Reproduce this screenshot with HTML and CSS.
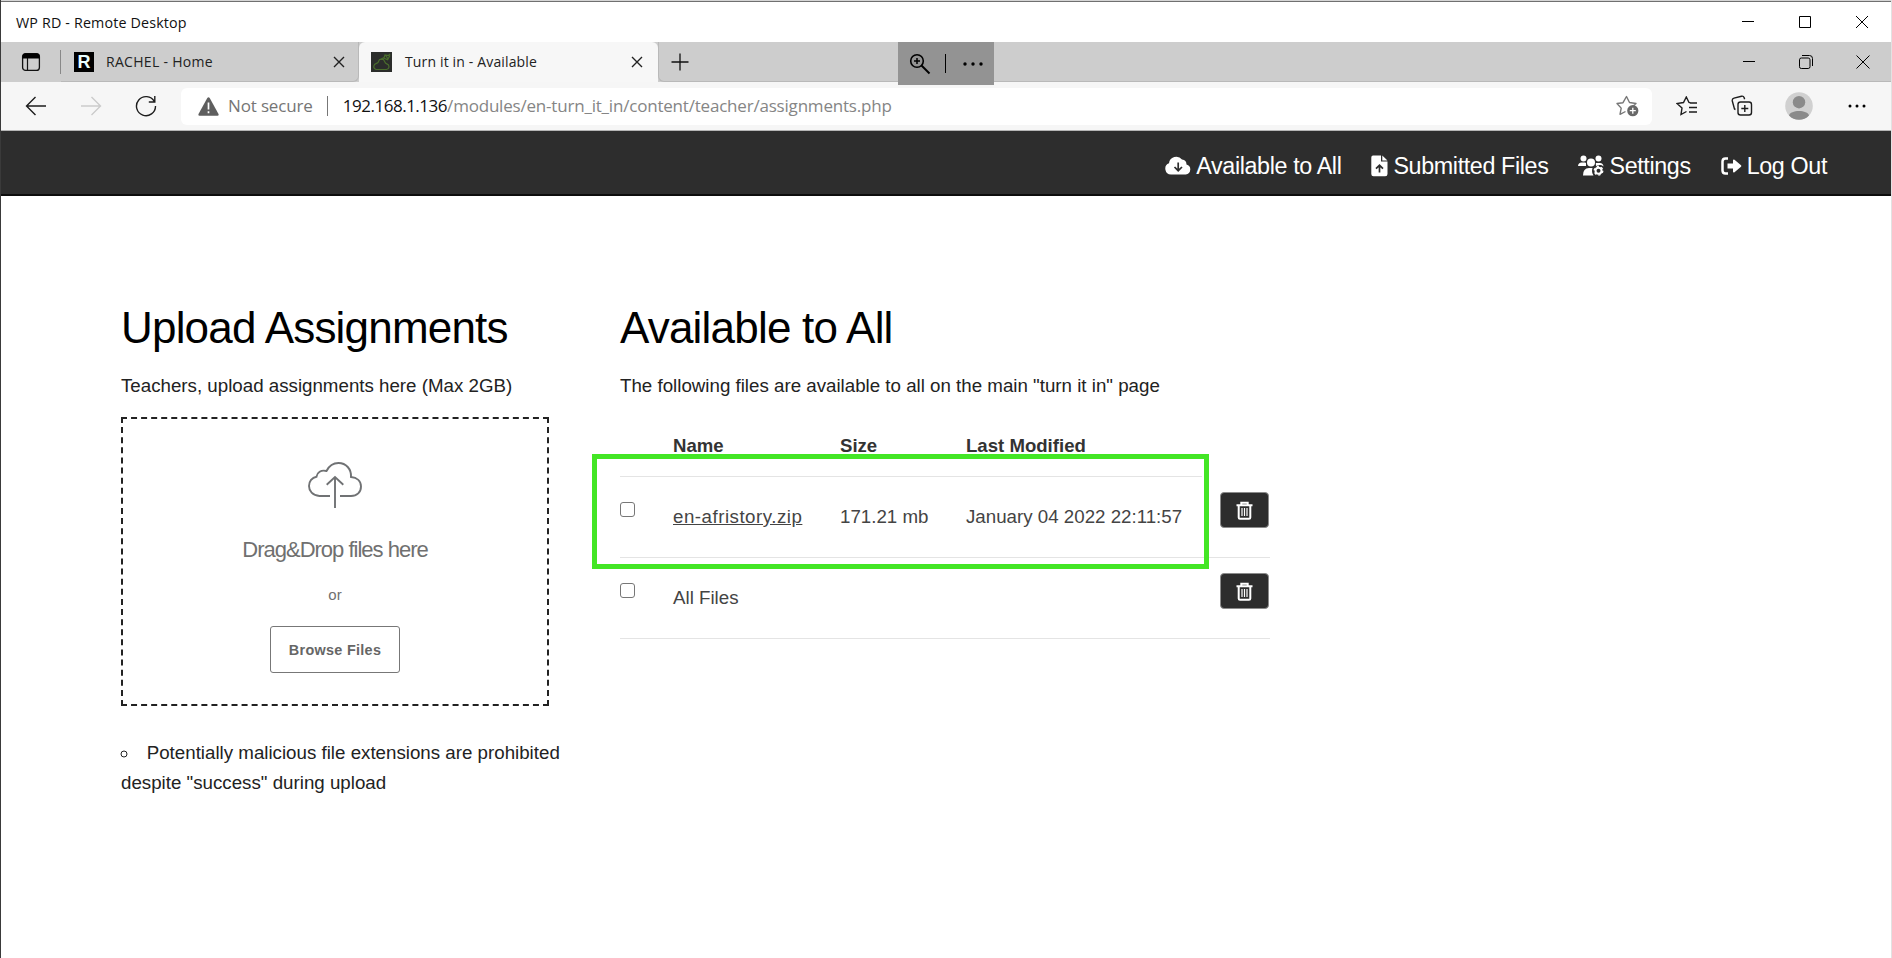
FILE: index.html
```html
<!DOCTYPE html>
<html lang="en">
<head>
<meta charset="utf-8">
<title>WP RD - Remote Desktop</title>
<link rel="stylesheet" href="styles.css">
</head>
<body>
<div class="window">
  <div class="edge-strip"></div>
  <header class="titlebar">
    <span class="title">WP RD - Remote Desktop</span>
    <div class="controls">
      <svg width="14" height="14" viewBox="0 0 14 14"><path d="M1 6.5h12"/></svg>
      <svg width="14" height="14" viewBox="0 0 14 14"><path d="M1.5 1.5h11v11h-11z"/></svg>
      <svg width="14" height="14" viewBox="0 0 14 14"><path d="M1 1l12 12M13 1L1 13"/></svg>
    </div>
  </header>

  <div class="tabbar">
    <svg class="workspace" width="20" height="20" viewBox="0 0 20 20"><rect x="1.6" y="1.6" width="16.8" height="16.8" rx="3" fill="none" stroke="#111" stroke-width="1.3"/><path d="M1.5 6.5V4a2.5 2.5 0 0 1 2.500-2.500h12A2.500 2.500 0 0 1 18.500 4v2.500z" fill="#000"/><path d="M6.500 6v12" stroke="#111" stroke-width="1.200"/></svg>
    <span class="tab-divider"></span>
    <div class="tab tab-idle">
      <span class="rachel">R</span>
      <span class="tab-label label-rachel">RACHEL - Home</span>
      <svg class="close" width="12" height="12" viewBox="0 0 12 12"><path d="M1 1l10 10M11 1L1 11"/></svg>
    </div>
    <div class="tab tab-active">
      <svg width="21" height="20" viewBox="0 0 21 20"><path fill="#2b2d2b" d="M0 0h21v20H0z"/><path d="M5 17.500h10.500q3.500-1 2-4.500L14.500 11 12.500 7.500H8.500L7 10.500 3.500 12.500q-2 3.500 1.500 5zM9 7.500l3.500-1.500 4.500 2M13 6l1-3 3.500.5 1.500-1.500M14.500 3l2.500 4 2-3.500" fill="none" stroke="#4a6e2c" stroke-width="1.200"/></svg>
      <span class="tab-label label-turn">Turn it in - Available</span>
      <svg class="close" width="12" height="12" viewBox="0 0 12 12"><path d="M1 1l10 10M11 1L1 11"/></svg>
    </div>
    <div class="tab-rest">
      <svg class="plus" width="18" height="18" viewBox="0 0 18 18"><path d="M9 .5v17M.5 9h17"/></svg>
      <div class="controls inner">
        <svg width="14" height="14" viewBox="0 0 14 14"><path d="M1 6.500h12"/></svg>
        <svg width="16" height="16" viewBox="0 0 16 16"><rect x="1.500" y="4" width="10.500" height="10.500" rx="1.800"/><path d="M4 1.500h7.500a3 3 0 0 1 3 3V12"/></svg>
        <svg width="14" height="14" viewBox="0 0 14 14"><path d="M.5 .5l13 13M13.500 .5l-13 13"/></svg>
      </div>
    </div>
    <div class="rdp-bar">
      <svg width="22" height="22" viewBox="0 0 22 22" fill="none" stroke="#000"><circle cx="8" cy="8" r="6.300" stroke-width="1.600"/><path d="M8 5v6M5 8h6" stroke-width="1.500"/><path d="M12.500 12.500l8 8" stroke-width="2"/></svg>
      <span class="rdp-sep"></span>
      <svg width="20" height="4" viewBox="0 0 20 4"><circle cx="2" cy="2" r="1.700"/><circle cx="10" cy="2" r="1.700"/><circle cx="18" cy="2" r="1.700"/></svg>
    </div>
  </div>

  <div class="toolbar">
    <svg class="nav-icon" width="22" height="20" viewBox="0 0 22 20"><path d="M21 10H1.500M10.500 1L1.500 10l9 9"/></svg>
    <svg class="nav-icon forward" width="22" height="20" viewBox="0 0 22 20"><path d="M1 10h19.500M11.500 1l9 9-9 9"/></svg>
    <svg class="nav-icon reload" width="22" height="22" viewBox="0 0 22 22"><path d="M19.300 6.500A9.500 9.500 0 1 0 20.500 11M19.800 1v6h-6"/></svg>
    <div class="address">
      <svg width="21" height="19" viewBox="0 0 21 19"><path d="M9.300 1Q10.500-.6 11.700 1L20.500 17q.5 1.600-1 1.700h-18q-1.500-.1-1-1.700z" fill="#5e5e5e"/><path d="M10.500 5.500v7M10.500 14.200v2" stroke="#fff" stroke-width="1.700"/></svg>
      <span class="secure">Not secure</span>
      <span class="address-sep"></span>
      <span class="url"><span class="host">192.168.1.136</span>/modules/en-turn_it_in/content/teacher/assignments.php</span>
      <svg class="add-star" width="24" height="22" viewBox="0 0 24 22"><path d="M9.500 16.500L4 19.300l1.200-6.200L1 8.500l6-.8L10.500 1.500l3 6 6.500 1-2.500 2.200" fill="none" stroke="#777" stroke-width="1.400" stroke-linejoin="round"/><circle cx="16.800" cy="15.700" r="5.600" fill="#686868"/><path d="M16.800 12.700v6M13.800 15.700h6" stroke="#fff" stroke-width="1.300"/></svg>
    </div>
    <svg class="tool fav" width="22" height="20" viewBox="0 0 22 20"><path d="M10.500 15.500L5 18.500l1-6.500L1 7.500l6.500-1L10.300 1l2.700 5.500 2.500.7M14 7h7M13 11.500h8M13 16h8"/></svg>
    <svg class="tool coll" width="22" height="22" viewBox="0 0 22 22"><rect x="7" y="7" width="13.500" height="13" rx="2.500"/><path d="M13.800 10v7M10.300 13.500h7M4.500 14.500L3.500 14 1.300 6Q.9 3.800 3 3.200L10.500 1.200q2-.4 2.700 1.500l.4 1.500"/></svg>
    <svg class="avatar" width="28" height="28" viewBox="0 0 28 28"><circle cx="14" cy="14" r="13.800" fill="#d0d0d0"/><circle cx="14" cy="10.200" r="6.200" fill="#8a8a8a"/><path d="M4 23.500c1-6 19-6 20 0a13.800 13.800 0 0 1-20 0z" fill="#8a8a8a"/></svg>
    <svg class="more" width="18" height="4" viewBox="0 0 18 4"><circle cx="2" cy="2" r="1.500"/><circle cx="9" cy="2" r="1.500"/><circle cx="16" cy="2" r="1.500"/></svg>
  </div>

  <nav class="site-nav">
    <a class="nav-link"><svg width="26" height="19" viewBox="0 0 26 19"><path d="M6 18.500a5.800 5.800 0 0 1-2-11.200A7.300 7.300 0 0 1 17 3.500a5 5 0 0 1 4.500 5 5.100 5.100 0 0 1-.8 10z" fill="#fff"/><path d="M13.200 6.500v8M9.500 11l3.700 3.700L17 11" fill="none" stroke="#2d2d2d" stroke-width="1.700"/></svg>Available to All</a>
    <a class="nav-link"><svg width="17" height="22" viewBox="0 0 17 22"><path d="M2 .5h8v6h6.500V19q0 2.300-2.300 2.300H2.500Q.3 21.300.3 19V2.500Q.3.500 2 .5zM11.300.5l5.200 5h-5.200z" fill="#fff"/><path d="M8.500 17.500v-6M5 13.700l3.500-3.400 3.500 3.400" fill="none" stroke="#2d2d2d" stroke-width="1.700"/></svg>Submitted Files</a>
    <a class="nav-link"><svg width="26" height="21" viewBox="0 0 26 21" fill="#fff"><circle cx="5.500" cy="3.500" r="3"/><circle cx="20.500" cy="3.500" r="3"/><circle cx="13" cy="7.500" r="4"/><path d="M0 11q.3-3.500 3.500-3.500h3.500q1.500 0 1 1.500L8 11zM18 11l-.2-3h4.200q3.200 0 3.500 3.500-2-1.700-4-1.400T18 11zM5 20.500q0-7.500 6-7.500h3.500q-1.300 4 1 7.500z"/><circle cx="20.500" cy="15.700" r="3" fill="none" stroke="#fff" stroke-width="2"/><circle cx="20.500" cy="15.700" r="4.300" fill="none" stroke="#fff" stroke-width="1.300" stroke-dasharray="2.200 2.300"/></svg>Settings</a>
    <a class="nav-link logout"><svg width="21" height="18" viewBox="0 0 21 18"><path d="M7 1.500H4.500q-3 0-3 3v9q0 3 3 3H7" fill="none" stroke="#fff" stroke-width="2.500"/><path d="M6.500 6.500h5.500V3.200q.3-1.300 1.500-.5L20 8.200q.8.800 0 1.600l-6.500 5.500q-1.200.8-1.500-.5v-3.300H6.500z" fill="#fff"/></svg>Log Out</a>
  </nav>

  <main class="page">
    <section class="upload">
      <h1>Upload Assignments</h1>
      <p class="lead">Teachers, upload assignments here (Max 2GB)</p>
      <div class="dropzone">
        <svg class="cloud" width="54" height="47" viewBox="0 0 54 47"><path d="M22 34H11.500C4.500 33.500 1 29 1 24c0-4.500 3-8.500 7.500-9.300C9 10.500 13 7.500 18.500 9 21 4 25.500 1 30.500 1 38 1 43.500 7 43 15c6 .5 10 4 10 9.500S49 34 43 34H32M27 46V15.500M18.700 22.700l8.300-7.700 8.300 7.700" fill="none" stroke="#707274" stroke-width="1.900"/></svg>
        <h3>Drag&amp;Drop files here</h3>
        <span class="or">or</span>
        <button class="browse">Browse Files</button>
      </div>
      <ul class="note"><li>Potentially malicious file extensions are prohibited despite "success" during upload</li></ul>
    </section>

    <section class="available">
      <h1>Available to All</h1>
      <p class="lead">The following files are available to all on the main "turn it in" page</p>
      <div class="files">
        <div class="row head"><span></span><b>Name</b><b>Size</b><b>Last Modified</b></div>
        <div class="row">
          <span class="check"></span><a class="file">en-afristory.zip</a><span>171.21 mb</span><span>January 04 2022 22:11:57</span>
          <button class="trash"><svg width="17" height="19" viewBox="0 0 17 19"><path d="M.5 4.200h16M5.300 4V1.800h6.400V4M2.700 4.500v12q0 1.300 1.300 1.300h9q1.300 0 1.300-1.300v-12"/><path class="bars" d="M6 7v8M8.500 7v8M11 7v8"/></svg></button>
        </div>
        <div class="row">
          <span class="check"></span><span>All Files</span><span></span><span></span>
          <button class="trash"><svg width="17" height="19" viewBox="0 0 17 19"><path d="M.5 4.200h16M5.300 4V1.800h6.400V4M2.700 4.500v12q0 1.300 1.300 1.300h9q1.300 0 1.300-1.300v-12"/><path class="bars" d="M6 7v8M8.500 7v8M11 7v8"/></svg></button>
        </div>
        <div class="highlight"></div>
      </div>
    </section>
  </main>
</div>
</body>
</html>
```
FILE: styles.css
```css
* { box-sizing: border-box; }
body { margin: 0; background: #fff; font-family: "Liberation Sans", Arial, sans-serif; }
svg { display: block; flex: none; }
h1, h3, p, ul { margin: 0; padding: 0; font-weight: 400; }
button { font-family: inherit; padding: 0; }
.window { height: 958px; border-left: 1px solid #3a3a3a; border-right: 1px solid #e2e2e2; overflow: hidden; display: flex; flex-direction: column; }
.edge-strip { height: 2px; flex: none; background: #d5d5d5; border-bottom: 1px solid #707070; }

.titlebar { height: 40px; flex: none; display: flex; align-items: center; justify-content: space-between; padding: 0 22px 0 15px; }
.title { font: 14.3px/20px "Open Sans", sans-serif; letter-spacing: 0.15px; color: #111; white-space: nowrap; padding-top: 1px; }
.controls { display: flex; align-items: center; gap: 43px; fill: none; stroke: #000; stroke-width: 1; }
.controls.inner { gap: 42px; }

.tabbar { height: 40px; flex: none; display: flex; position: relative; background: #cdcdcd; }
.workspace { margin: 10px 19px 0 20px; }
.tab-divider { width: 1px; height: 24px; margin-top: 8px; background: #888; }
.tab { display: flex; align-items: center; height: 40px; font: 14px/20px "Open Sans", sans-serif; color: #222; }
.tab-idle { width: 298px; padding: 0 13px 0 13px; border-right: 1px solid #b9b9b9; border-bottom: 1px solid #b9b9b9; border-bottom-right-radius: 6px; }
.tab-active { width: 299px; padding: 0 15px 0 12px; background: #f7f7f7; border-radius: 6px 6px 0 0; }
.tab-label { white-space: nowrap; margin-left: 12px; }
.label-rachel { letter-spacing: 0.3px; }
.label-turn { letter-spacing: 0.15px; margin-left: 13px; }
.close { margin-left: auto; stroke: #222; stroke-width: 1.4; }
.rachel { width: 20px; height: 20px; background: #000; color: #e9ffff; font: bold 18px/20px "Liberation Sans", sans-serif; text-align: center; }
.tab-rest { flex: 1; display: flex; align-items: center; justify-content: space-between; padding: 0 21px 0 12px; border-left: 1px solid #b9b9b9; border-bottom: 1px solid #b9b9b9; border-bottom-left-radius: 6px; }
.plus { stroke: #111; stroke-width: 1.3; }
.rdp-bar { position: absolute; left: 897px; top: 0; width: 96px; height: 43px; background: #939393; display: flex; align-items: center; padding-left: 11px; }
.rdp-sep { width: 1px; height: 19px; background: #000; margin: 0 17px 0 14px; }

.toolbar { height: 49px; flex: none; display: flex; align-items: center; background: #f6f6f6; border-bottom: 1px solid #b5b5b5; padding-left: 24px; }
.nav-icon { fill: none; stroke: #1d1d1d; stroke-width: 1.4; margin-bottom: 1px; }
.forward { stroke: #cbcbcb; margin-left: 33px; }
.reload { margin-left: 33px; }
.address { width: 1471px; height: 37px; margin-left: 24px; background: #fff; border-radius: 6px; display: flex; align-items: center; padding: 0 12px 0 17px; color: #757575; font: 17px/24px "Open Sans", sans-serif; }
.secure { margin-left: 9px; white-space: nowrap; letter-spacing: -0.15px; }
.address-sep { width: 1px; height: 20px; background: #777; margin: 0 15px 0 14px; }
.url { white-space: nowrap; color: #858585; letter-spacing: -0.2px; }
.host { color: #111; letter-spacing: -0.48px; }
.add-star { margin-left: auto; }
.tool { fill: none; stroke: #1d1d1d; stroke-width: 1.4; }
.fav { margin-left: 24px; }
.coll { margin-left: 33px; }
.avatar { margin-left: 32px; }
.more { margin-left: 35px; }

.site-nav { height: 65px; flex: none; background: #2d2d2d; border-bottom: 2px solid #0c0c0c; display: flex; justify-content: flex-end; align-items: center; gap: 30px; padding-right: 64px; }
.nav-link { display: flex; align-items: center; gap: 5px; color: #fff; font-size: 23.3px; line-height: 30px; letter-spacing: -0.37px; white-space: nowrap; padding-top: 6px; }

.page { display: flex; padding: 102px 0 0 120px; color: #222; font-size: 18.73px; line-height: 30px; }
.upload { width: 499px; }
h1 { font-size: 44px; line-height: 60px; letter-spacing: -0.8px; color: #000; white-space: nowrap; }
.lead { margin-top: 13px; white-space: nowrap; }
.dropzone { width: 428px; height: 289px; margin-top: 16px; border: 2px dashed #222; display: flex; flex-direction: column; align-items: center; color: #707070; }
.cloud { margin-top: 43px; }
h3 { font-size: 22px; line-height: 30px; letter-spacing: -1px; margin-top: 26px; white-space: nowrap; }
.or { font-size: 15px; line-height: 20px; margin-top: 20px; }
.browse { width: 130px; height: 47px; margin-top: 21px; background: #fff; border: 1px solid #777; border-radius: 3px; color: #666; font-size: 14.4px; font-weight: 700; letter-spacing: 0.3px; }
.note { width: 460px; margin-top: 32px; list-style: circle inside; }

.files { position: relative; width: 650px; margin-top: 30px; color: #444; }
.row { display: grid; grid-template-columns: 53px 167px 126px 254px 50px; height: 81px; border-bottom: 1px solid #e4e4e4; padding-top: 25px; white-space: nowrap; }
.head { width: 582px; height: 46px; padding-top: 0; color: #333; font-size: 18.6px; }
.check { width: 15px; height: 15px; border: 1px solid #777; border-radius: 3px; background: #fff; }
.file { text-decoration: underline; letter-spacing: 0.5px; }
.trash { width: 49px; height: 36px; margin-top: -10px; display: grid; place-items: center; background: #2d2d2d; border: 1px solid #8b8b8b; border-radius: 4px; }
.trash svg { fill: none; stroke: #fff; stroke-width: 2; }
.trash .bars { stroke-width: 1.2; }
.highlight { position: absolute; left: -28px; top: 23px; width: 617px; height: 115px; border: 5px solid #43e625; }
```
